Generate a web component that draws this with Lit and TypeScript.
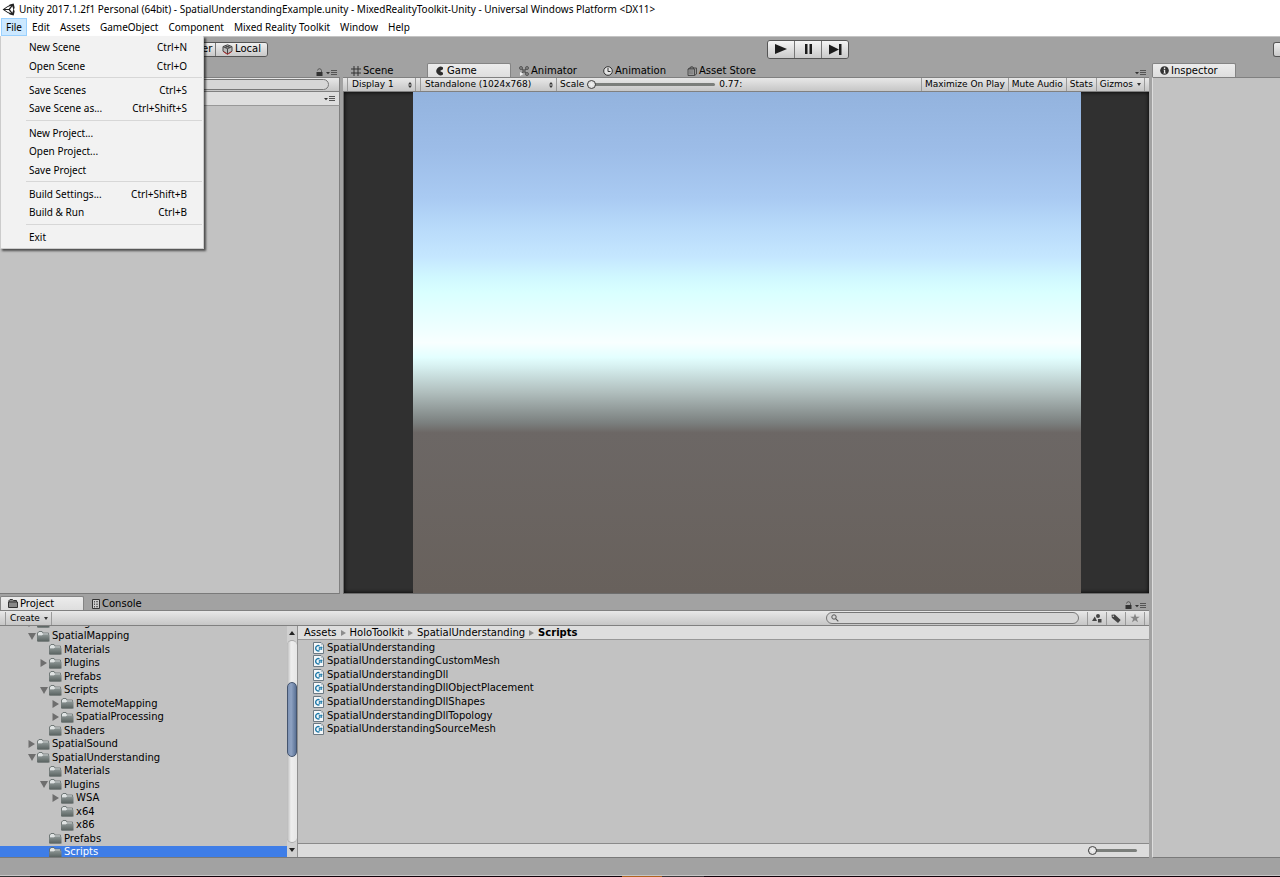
import { LitElement, html, css, svg, nothing } from "lit";
import { customElement } from "lit/decorators.js";
import { classMap } from "lit/directives/class-map.js";

const icons: Record<string, unknown> = {
  unity: svg`<svg viewBox="0 0 14 14" width="13" height="13"><path fill="#222" fill-rule="evenodd" d="M12.6 .6 13.6 4.8 12.9 7 13.6 9.2 12.6 13.4 8.4 12.3 7 11 6.2 10.9 .6 7 6.2 3.1 7 3 8.4 1.7ZM9.9 2.9 6.2 4.2 3.2 6.4 7.2 6.4ZM11.2 3.5 8.6 7 11.2 10.5 12.2 7ZM3.2 7.6 6.2 9.8 9.9 11.1 7.2 7.6Z"/></svg>`,
  pivot: svg`<svg viewBox="0 0 11 11" width="11" height="11"><path d="M1 1H10V10H1Z" fill="#ddd" stroke="#444"/><circle cx="5.500" cy="5.500" r="1.500" fill="#b33"/></svg>`,
  cube: svg`<svg viewBox="0 0 11 11" width="11" height="11"><path d="M5.5.8 10 2.6v4.6L5.5 10 1 7.200V2.600Z" fill="#bbb" stroke="#444"/><path d="M1 2.600 5.500 4.700 10 2.600M5.500 4.700V10M3 1.700 7.800 3.700M8 1.700 3.200 3.700" stroke="#444" fill="none"/><path d="M1.500 7.800 5.500 10.300 9.500 7.800" stroke="#b33" fill="none"/></svg>`,
  play: svg`<svg viewBox="0 0 12 10" width="12" height="10"><path d="M0 0 12 5 0 10Z" fill="#1c1c1c"/></svg>`,
  pause: svg`<svg viewBox="0 0 9 10" width="9" height="10"><path d="M1 0H3.500V10H1ZM5.500 0H8V10H5.500Z" fill="#1c1c1c"/></svg>`,
  step: svg`<svg viewBox="0 0 13 11" width="13" height="11"><path d="M0 .5 10 5.500V0H12.500V11H10V5.500L0 10.500Z" fill="#1c1c1c"/></svg>`,
  scene: svg`<svg viewBox="0 0 10 10" width="10" height="10"><path d="M3 0V10M7 0V10M0 3H10M0 7H10" stroke="#333" fill="none"/></svg>`,
  game: svg`<svg viewBox="0 0 10 10" width="10" height="10"><path d="M8 1.400A4.300 4.300 0 1 0 8 8.600L8 6.800 5 5 8 3.200Z" fill="#2c2c2c"/></svg>`,
  animator: svg`<svg viewBox="0 0 10 10" width="10" height="10"><path d="M2 2 8 8M8 2 2 8" stroke="#555"/><g fill="#888" stroke="#444" stroke-width=".8"><circle cx="2" cy="2" r="1.500"/><circle cx="8" cy="2" r="1.500"/><circle cx="5" cy="5" r="1.300"/><circle cx="8" cy="8" r="1.500"/></g><path d="M1 6 4.500 8 1 10Z" fill="#eee"/></svg>`,
  clock: svg`<svg viewBox="0 0 10 10" width="10" height="10"><circle cx="5" cy="5" r="4.300" fill="#e4e4e4" stroke="#333"/><path d="M5 2V5.500H7.500" stroke="#333" fill="none"/></svg>`,
  store: svg`<svg viewBox="0 0 10 10" width="10" height="10"><path d="M1 3H7.500V9.500H1ZM7.500 9.500 9.500 8V2H3L1 3M3 3V1.500Q5 -.5 6.500 1.500V3" fill="#999" stroke="#444" stroke-width=".9"/><path d="M2 5H6.500M2 7H6.500" stroke="#666" stroke-width=".8"/></svg>`,
  info: svg`<svg viewBox="0 0 10 10" width="9" height="9"><circle cx="5" cy="5" r="4.800" fill="#333"/><path d="M4 4.200H5.800V7.500H6.500V8.300H3.800V7.500H4.400V5H4ZM4.300 1.800H5.800V3.200H4.300Z" fill="#eee"/></svg>`,
  project: svg`<svg viewBox="0 0 10 9" width="10" height="9"><path d="M.5 8.500V3H9.500V8.500ZM1 3V1.500L2 .5H4.500L5.500 1.500H8.500V3" fill="#888" stroke="#333"/></svg>`,
  console: svg`<svg viewBox="0 0 8 10" width="8" height="10"><path d="M.5 .5H7.500V9.500H.5Z" fill="#ccc" stroke="#333"/><path d="M2.500 2V3.500M2.500 4.500V6M2.500 7V8.500M4 2.700H6M4 5.200H6M4 7.700H6" stroke="#444" stroke-width=".9"/></svg>`,
  lock: svg`<svg viewBox="0 0 7 8" width="7" height="8"><path d="M.5 4H6.500V8H.5Z" fill="#333"/><path d="M1.500 2.500Q2 .7 3.500.7T5.500 2.500V4" stroke="#555" fill="none"/></svg>`,
  options: svg`<svg viewBox="0 0 11 6" width="11" height="6"><path d="M0 2H4L2 4.200Z" fill="#333"/><path d="M5 .5H11M5 2.500H11M5 4.500H11" stroke="#555"/></svg>`,
  search: svg`<svg viewBox="0 0 8 8" width="8" height="8"><circle cx="3" cy="3" r="2.200" fill="none" stroke="#555"/><path d="M4.600 4.600 7.300 7.300" stroke="#555" stroke-width="1.100"/></svg>`,
  shapes: svg`<svg viewBox="0 0 10 9" width="10" height="9"><circle cx="6" cy="2" r="2" fill="#444"/><path d="M0 7 2.800 2.500 5 7ZM6 5H9.500V8.500H6Z" fill="#444"/></svg>`,
  tag: svg`<svg viewBox="0 0 10 9" width="10" height="9"><path d="M.5 .8 3.800.5 9.700 6 7 9 .8 3.800Z" fill="#444"/><circle cx="2.300" cy="2.300" r=".8" fill="#ccc"/></svg>`,
  star: svg`<svg viewBox="0 0 10 10" width="10" height="10"><path d="M5 .4 6.200 3.700H9.800L6.900 5.800 8 9.300 5 7.200 2 9.300 3.100 5.800 .2 3.700H3.800Z" fill="#858585"/></svg>`,
  folder: svg`<svg viewBox="0 0 13 11" width="13" height="11"><defs><linearGradient id="fg" x1="0" y1="0" x2="0" y2="1"><stop offset="0" stop-color="#8b9493"/><stop offset="1" stop-color="#58615f"/></linearGradient></defs><path d="M.5 10V2L2 .5H5L6 2H11.500V10Z" fill="#7e8786" stroke="#5d6665" stroke-width=".7"/><path d="M1 4.500V2.200L2.200 1H4.800L5.800 2.500H11.200V3.500H6L5 4.500Z" fill="#dfe3e3"/><path d="M.4 10.500V4.800H5.200L6.200 3.800H12.500V10.500Z" fill="url(#fg)"/></svg>`,
  script: svg`<svg viewBox="0 0 11 12" width="11" height="12"><path d="M.5 .5H8L10.500 3V11.500H.5Z" fill="#f4f7f9" stroke="#6c7a84"/><path d="M7.800 .8V3.200H10.300Z" fill="#b8c4cc"/><path d="M6.500 3.800A2.700 2.700 0 1 0 6.500 8.700" fill="none" stroke="#1c78a8" stroke-width="1.400"/><path d="M5.800 5.500H9.500M5.500 7H9.300M7 4.500 6.500 8M8.700 4.500 8.200 8" stroke="#1c78a8" stroke-width=".8"/></svg>`,
  right: svg`<svg viewBox="0 0 7 8" width="7" height="8"><path d="M.5 0 7 4 .5 8Z" fill="#6e6e6e"/></svg>`,
  down: svg`<svg viewBox="0 0 8 7" width="8" height="7"><path d="M0 0H8L4 7Z" fill="#6e6e6e"/></svg>`,
  crumb: svg`<svg viewBox="0 0 5 6" width="5" height="6"><path d="M0 0 5 3 0 6Z" fill="#8c8c8c"/></svg>`,
  up6: svg`<svg viewBox="0 0 6 4" width="6" height="4"><path d="M0 4H6L3 0Z" fill="#222"/></svg>`,
  down6: svg`<svg viewBox="0 0 6 4" width="6" height="4"><path d="M0 0H6L3 4Z" fill="#222"/></svg>`,
  caret: svg`<svg viewBox="0 0 4 3" width="4" height="3"><path d="M0 0H4L2 3Z" fill="#333"/></svg>`,
  updown: svg`<svg viewBox="0 0 4 6" width="4" height="6"><path d="M0 2.400 2 0 4 2.400ZM0 3.600 2 6 4 3.600Z" fill="#333"/></svg>`,
};

const fileMenu: (null | [string, string])[] = [
  ["New Scene", "Ctrl+N"],
  ["Open Scene", "Ctrl+O"],
  null,
  ["Save Scenes", "Ctrl+S"],
  ["Save Scene as...", "Ctrl+Shift+S"],
  null,
  ["New Project...", ""],
  ["Open Project...", ""],
  ["Save Project", ""],
  null,
  ["Build Settings...", "Ctrl+Shift+B"],
  ["Build & Run", "Ctrl+B"],
  null,
  ["Exit", ""],
];

const menus = ["File", "Edit", "Assets", "GameObject", "Component", "Mixed Reality Toolkit", "Window", "Help"];

/* name, depth, fold state */
const tree: [string, number, "right" | "down" | ""][] = [
  ["SharingWithUNET", 1, "right"],
  ["SpatialMapping", 1, "down"],
  ["Materials", 2, ""],
  ["Plugins", 2, "right"],
  ["Prefabs", 2, ""],
  ["Scripts", 2, "down"],
  ["RemoteMapping", 3, "right"],
  ["SpatialProcessing", 3, "right"],
  ["Shaders", 2, ""],
  ["SpatialSound", 1, "right"],
  ["SpatialUnderstanding", 1, "down"],
  ["Materials", 2, ""],
  ["Plugins", 2, "down"],
  ["WSA", 3, "right"],
  ["x64", 3, ""],
  ["x86", 3, ""],
  ["Prefabs", 2, ""],
  ["Scripts", 2, ""],
];

const files = ["", "CustomMesh", "Dll", "DllObjectPlacement", "DllShapes", "DllTopology", "SourceMesh"];

@customElement("app-root")
export class AppRoot extends LitElement {
  static styles = css`
    :host {
      display: flex;
      flex-direction: column;
      height: 100vh;
      overflow: hidden;
      background: #a2a2a2;
      color: #000;
      font: 10px/12px "DejaVu Sans", Verdana, sans-serif;
    }
    * { box-sizing: border-box; }
    svg { display: block; flex: none; }
    button, select, input {
      appearance: none;
      margin: 0;
      padding: 0;
      border: 0;
      border-radius: 0;
      background: none;
      color: inherit;
      font: inherit;
      white-space: nowrap;
    }
    ul { list-style: none; margin: 0; padding: 0; }
    .spacer { flex: 1; }

    .titlebar, .menubar {
      display: flex;
      align-items: center;
      height: 18px;
      flex: none;
      background: #fff;
      font: 10px/18px "Noto Sans", "Noto Sans CJK KR", sans-serif;
    }
    .titlebar { gap: 4px; padding-left: 2px; }
    .title { margin: 0; font: inherit; }
    .menubar { height: 19px; padding-left: 1px; border-bottom: 1px solid #c4c4c4; position: relative; z-index: 2; }
    .top { height: 18px; padding: 0 4px; border: 1px solid transparent; line-height: 16px; }
    .top.open { background: #cce8ff; border-color: #99d1ff; }
    .dropdown {
      position: absolute;
      left: 0;
      top: 18px;
      width: 204px;
      padding: 2px 1px 2px 2px;
      display: flex;
      flex-direction: column;
      height: 213px;
      background: #f2f2f2;
      border: 1px solid #ccc;
      border-top: 0;
      box-shadow: 2px 2px 2px rgba(0, 0, 0, 0.6);
    }
    .entry {
      flex: 1;
      display: flex;
      align-items: center;
      justify-content: space-between;
      padding: 0 15px 0 26px;
      line-height: 18px;
    }
    .rule { height: 6px; margin: 0 0 0 23px; border: 0; display: flex; align-items: center; }
    .rule::before { content: ""; flex: 1; height: 1px; background: #d7d7d7; }

    .toolbar { display: flex; align-items: center; height: 24px; flex: none; padding-left: 162px; }
    .group { display: flex; border: 1px solid #555; border-radius: 3px; overflow: hidden; }
    .tool {
      display: flex;
      align-items: center;
      justify-content: center;
      gap: 2px;
      height: 13px;
      width: 52px;
      background: linear-gradient(#efefef, #c9c9c9);
      border-left: 1px solid #777;
    }
    .tool:first-child { border-left: 0; }
    .playback { margin-left: 499px; }
    .playback .tool { width: 26px; height: 17px; background: linear-gradient(#f4f4f4, #cacaca); }
    .playback .tool + .tool { width: 27px; }
    .cut { border-right: 0; border-radius: 3px 0 0 3px; width: 7px; }

    .workspace {
      flex: 1;
      min-height: 0;
      display: grid;
      grid-template-columns: 340px 1fr 128px;
      grid-template-rows: 1fr 264px;
      column-gap: 3px;
    }
    .panel { display: flex; flex-direction: column; min-width: 0; min-height: 0; }
    .project { grid-column: 1 / 3; padding-top: 1px; }
    .inspector { grid-column: 3; grid-row: 1 / 3; }

    .tabs { display: flex; height: 16px; flex: none; align-items: flex-end; padding-right: 3px; gap: 3px; }
    .tabrow { display: flex; flex: 1; }
    .tab {
      display: flex;
      align-items: center;
      gap: 2px;
      width: 84px;
      height: 14px;
      padding-left: 7px;
      border: 1px solid transparent;
      border-bottom: 0;
    }
    .tab.on {
      background: linear-gradient(#ececec, #dedede);
      border-color: #848484;
      border-radius: 2px 2px 0 0;
    }
    .icon { padding-bottom: 1px; }
    .strip {
      display: flex;
      align-items: center;
      height: 15px;
      flex: none;
      background: linear-gradient(#e8e8e8, #c6c6c6);
      border-top: 1px solid #808080;
      border-bottom: 1px solid #808080;
      font-size: 9px;
      line-height: 13px;
    }
    .cell {
      display: flex;
      align-items: center;
      height: 13px;
      padding: 0 3px;
      border-left: 1px solid #9a9a9a;
      gap: 4px;
    }
    .cell.last { border-right: 1px solid #9a9a9a; margin-right: 4px; }
    .cell.glyph { padding: 0 4px; }
    .cell.create { margin-left: 5px; padding: 0 3px 0 4px; }
    .pick { display: flex; align-items: center; border: solid #9a9a9a; border-width: 0 1px; height: 13px; padding: 0 3px 0 4px; margin-left: 4px; }
    .pick select { flex: 1; outline: 0; }
    .display { width: 69px; }
    .aspect { width: 137px; }
    .scale { padding: 0 3px; }
    input[type="range"] { width: 128px; height: 9px; }
    input[type="range"]::-webkit-slider-runnable-track {
      height: 3px;
      background: #7b7e7b;
      border-radius: 2px;
    }
    input[type="range"]::-webkit-slider-thumb {
      appearance: none;
      width: 9px;
      height: 9px;
      margin-top: -3px;
      border: 1px solid #444;
      border-radius: 50%;
      background: radial-gradient(#f4f4f4, #d0d0d0);
    }
    .value { padding-left: 4px; }

    .body { flex: 1; min-height: 0; background: #c2c2c2; border-bottom: 1px solid #7a7a7a; }
    .hierarchy .body, .hierarchy .strip, .hierarchy .scenehead { border-right: 1px solid #808080; }
    .field { flex: 1; height: 11px; border: 1px solid #777; border-radius: 6px; background: #d6d6d6; display: flex; align-items: center; padding: 0 4px; gap: 4px; }
    .field input { flex: 1; min-width: 0; outline: 0; height: 9px; }
    .hierarchy .field { margin: 0 10px 0 50px; }
    .scenehead {
      display: flex;
      align-items: center;
      justify-content: flex-end;
      height: 14px;
      flex: none;
      padding-right: 4px;
      background: #dedede;
      border-bottom: 1px solid #989898;
    }

    .view {
      flex: 1;
      min-height: 0;
      display: flex;
      justify-content: center;
      background: #303030;
      border-left: 1px solid #6d6d6d;
      border-bottom: 1px solid #6d6d6d;
      box-shadow: inset 0 0 4px #000;
    }
    .sky {
      height: 100%;
      aspect-ratio: 4 / 3;
      background: linear-gradient(
        #93b3de 0%, #9dbde8 12%, #a9caf2 21%, #b8dafa 27%, #c5e7ff 33%, #d0f8ff 37%, #d9ffff 40%,
        #eeffff 47%, #f8ffff 50%, #e3ffff 53%, #d5eeee 55%, #b0bebd 60%, #7b807f 66%, #6c6765 68%, #68615c 100%
      );
    }

    .project .tabs { height: 15px; }
    .project .strip { height: 16px; }
    .project .field { flex: none; width: 253px; margin-right: 8px; height: 12px; }
    .columns { flex: 1; min-height: 0; display: grid; grid-template-columns: 287px 11px 1fr; grid-template-rows: 100%; background: #c2c2c2; border-bottom: 1px solid #7a7a7a; }
    .treebox { display: flex; align-items: flex-end; overflow: hidden; min-height: 0; }
    .tree { flex: 1; display: grid; height: 243px; margin-bottom: -2px; grid-auto-rows: minmax(0, 1fr); }
    .node { display: flex; align-items: center; }
    .node button { display: flex; align-items: center; gap: 2px; }
    .d1 { padding-left: 26px; }
    .d2 { padding-left: 38px; }
    .d3 { padding-left: 50px; }
    .fold { display: flex; justify-content: center; width: 11px; }
    .node.selected { background: #3e7de7; color: #fff; }
    .scroll { display: flex; flex-direction: column; background: #d0d0d0; border-right: 1px solid #909090; }
    .scroll button { height: 14px; display: flex; align-items: center; justify-content: center; }
    .track { flex: 1; padding-top: 41px; border-radius: 6px; background: linear-gradient(90deg, #b8b8b8, #eee 40%, #e6e6e6); border: solid #aaa; border-width: 1px 0; }
    .thumb { height: 75px; border: 1px solid #44546e; border-radius: 5px; background: linear-gradient(90deg, #7e93b5, #8ea2c2 40%, #5b7296); }
    .content { display: flex; flex-direction: column; min-height: 0; }
    .crumbs { display: flex; align-items: center; gap: 4px; height: 14px; flex: none; padding-left: 6px; background: #dedede; border-bottom: 1px solid #989898; }
    .crumbs .here { font-weight: bold; }
    .files { display: grid; grid-auto-rows: minmax(0, 1fr); height: 95px; flex: none; margin-top: 1px; padding-left: 15px; }
    .files button { display: flex; align-items: center; gap: 3px; height: 100%; }
    .foot { display: flex; align-items: center; justify-content: flex-end; height: 14px; flex: none; margin-top: auto; padding-right: 12px; background: #dcdcdc; border-top: 1px solid #8a8a8a; }
    .foot input[type="range"] { width: 49px; }
    .inspector .body { border-left: 1px solid #ddd; border-top: 1px solid #808080; }

    .status { height: 18px; flex: none; border-bottom: 1px solid #c6c6c6; }
    .edge { height: 1px; flex: none; background: linear-gradient(90deg, #333 30px, #100008 30px 622px, #b0621f 622px 662px, #3a3436 662px 704px, #100008 704px); }
  `;

  private tab(icon: string, label: string, on = false) {
    return html`<button role="tab" aria-selected=${on} class=${classMap({ tab: true, on })}>${icons[icon]}<span>${label}</span></button>`;
  }

  private tool(icon: string, label: string) {
    return html`<button class="icon" aria-label=${label}>${icons[icon]}</button>`;
  }

  render() {
    return html`
      <header class="titlebar">
        ${icons.unity}
        <h1 class="title">Unity 2017.1.2f1 Personal (64bit) - SpatialUnderstandingExample.unity - MixedRealityToolkit-Unity - Universal Windows Platform &lt;DX11&gt;</h1>
      </header>
      <nav class="menubar" role="menubar">
        ${menus.map((m, i) => html`<button role="menuitem" class=${classMap({ top: true, open: i === 0 })}>${m}</button>`)}
        <div class="dropdown" role="menu">
          ${fileMenu.map((e) => e
            ? html`<button role="menuitem" class="entry"><span>${e[0]}</span><span>${e[1]}</span></button>`
            : html`<hr class="rule" />`)}
        </div>
      </nav>
      <div class="toolbar">
        <div class="group">
          <button class="tool">${icons.pivot}Center</button>
          <button class="tool">${icons.cube}Local</button>
        </div>
        <div class="group playback">
          <button class="tool" aria-label="Play">${icons.play}</button>
          <button class="tool" aria-label="Pause">${icons.pause}</button>
          <button class="tool" aria-label="Step">${icons.step}</button>
        </div>
        <div class="spacer"></div>
        <div class="group cut"><button class="tool" aria-label="Collab"></button></div>
      </div>
      <main class="workspace">
        <section class="panel hierarchy">
          <div class="tabs"><div class="tabrow"></div>${this.tool("lock", "Lock")}${this.tool("options", "Panel options")}</div>
          <div class="strip"><label class="field"><input type="text" aria-label="Search hierarchy" /></label></div>
          <div class="scenehead"><button aria-label="Scene options">${icons.options}</button></div>
          <div class="body"></div>
        </section>
        <section class="panel game">
          <div class="tabs">
            <div class="tabrow" role="tablist">
              ${this.tab("scene", "Scene")}${this.tab("game", "Game", true)}${this.tab("animator", "Animator")}${this.tab("clock", "Animation")}${this.tab("store", "Asset Store")}
            </div>
            ${this.tool("options", "Panel options")}
          </div>
          <div class="strip">
            <div class="pick display"><select aria-label="Display"><option>Display 1</option></select>${icons.updown}</div>
            <div class="pick aspect"><select aria-label="Aspect"><option>Standalone (1024x768)</option></select>${icons.updown}</div>
            <label class="scale" for="scale">Scale</label>
            <input id="scale" type="range" min="0" max="100" value="0" />
            <span class="value">0.77:</span>
            <div class="spacer"></div>
            <button class="cell">Maximize On Play</button>
            <button class="cell">Mute Audio</button>
            <button class="cell">Stats</button>
            <button class="cell last">Gizmos ${icons.caret}</button>
          </div>
          <div class="view"><div class="sky"></div></div>
        </section>
        <section class="panel inspector">
          <div class="tabs"><div class="tabrow" role="tablist">${this.tab("info", "Inspector", true)}</div></div>
          <div class="body"></div>
        </section>
        <section class="panel project">
          <div class="tabs">
            <div class="tabrow" role="tablist">${this.tab("project", "Project", true)}${this.tab("console", "Console")}</div>
            ${this.tool("lock", "Lock")}${this.tool("options", "Panel options")}
          </div>
          <div class="strip">
            <button class="cell last create">Create ${icons.caret}</button>
            <div class="spacer"></div>
            <label class="field">${icons.search}<input type="text" aria-label="Search project" /></label>
            <button class="cell glyph" aria-label="Search by type">${icons.shapes}</button>
            <button class="cell glyph" aria-label="Search by label">${icons.tag}</button>
            <button class="cell glyph last" aria-label="Favorites">${icons.star}</button>
          </div>
          <div class="columns">
            <div class="treebox">
              <ul class="tree" role="tree">
                ${tree.map(([name, depth, fold], i) => html`
                  <li role="treeitem" class="node d${depth} ${i === tree.length - 1 ? "selected" : ""}">
                    <span class="fold">${fold ? icons[fold] : nothing}</span>
                    <button>${icons.folder}<span>${name}</span></button>
                  </li>`)}
              </ul>
            </div>
            <div class="scroll">
              <button aria-label="Scroll up">${icons.up6}</button>
              <div class="track"><div class="thumb"></div></div>
              <button aria-label="Scroll down">${icons.down6}</button>
            </div>
            <div class="content">
              <div class="crumbs">
                <button>Assets</button>${icons.crumb}<button>HoloToolkit</button>${icons.crumb}<button>SpatialUnderstanding</button>${icons.crumb}<button class="here">Scripts</button>
              </div>
              <ul class="files">
                ${files.map((f) => html`<li><button>${icons.script}<span>SpatialUnderstanding${f}</span></button></li>`)}
              </ul>
              <div class="foot"><input type="range" aria-label="Icon size" min="0" max="100" value="0" /></div>
            </div>
          </div>
        </section>
      </main>
      <footer class="status"></footer>
      <div class="edge"></div>
    `;
  }
}
